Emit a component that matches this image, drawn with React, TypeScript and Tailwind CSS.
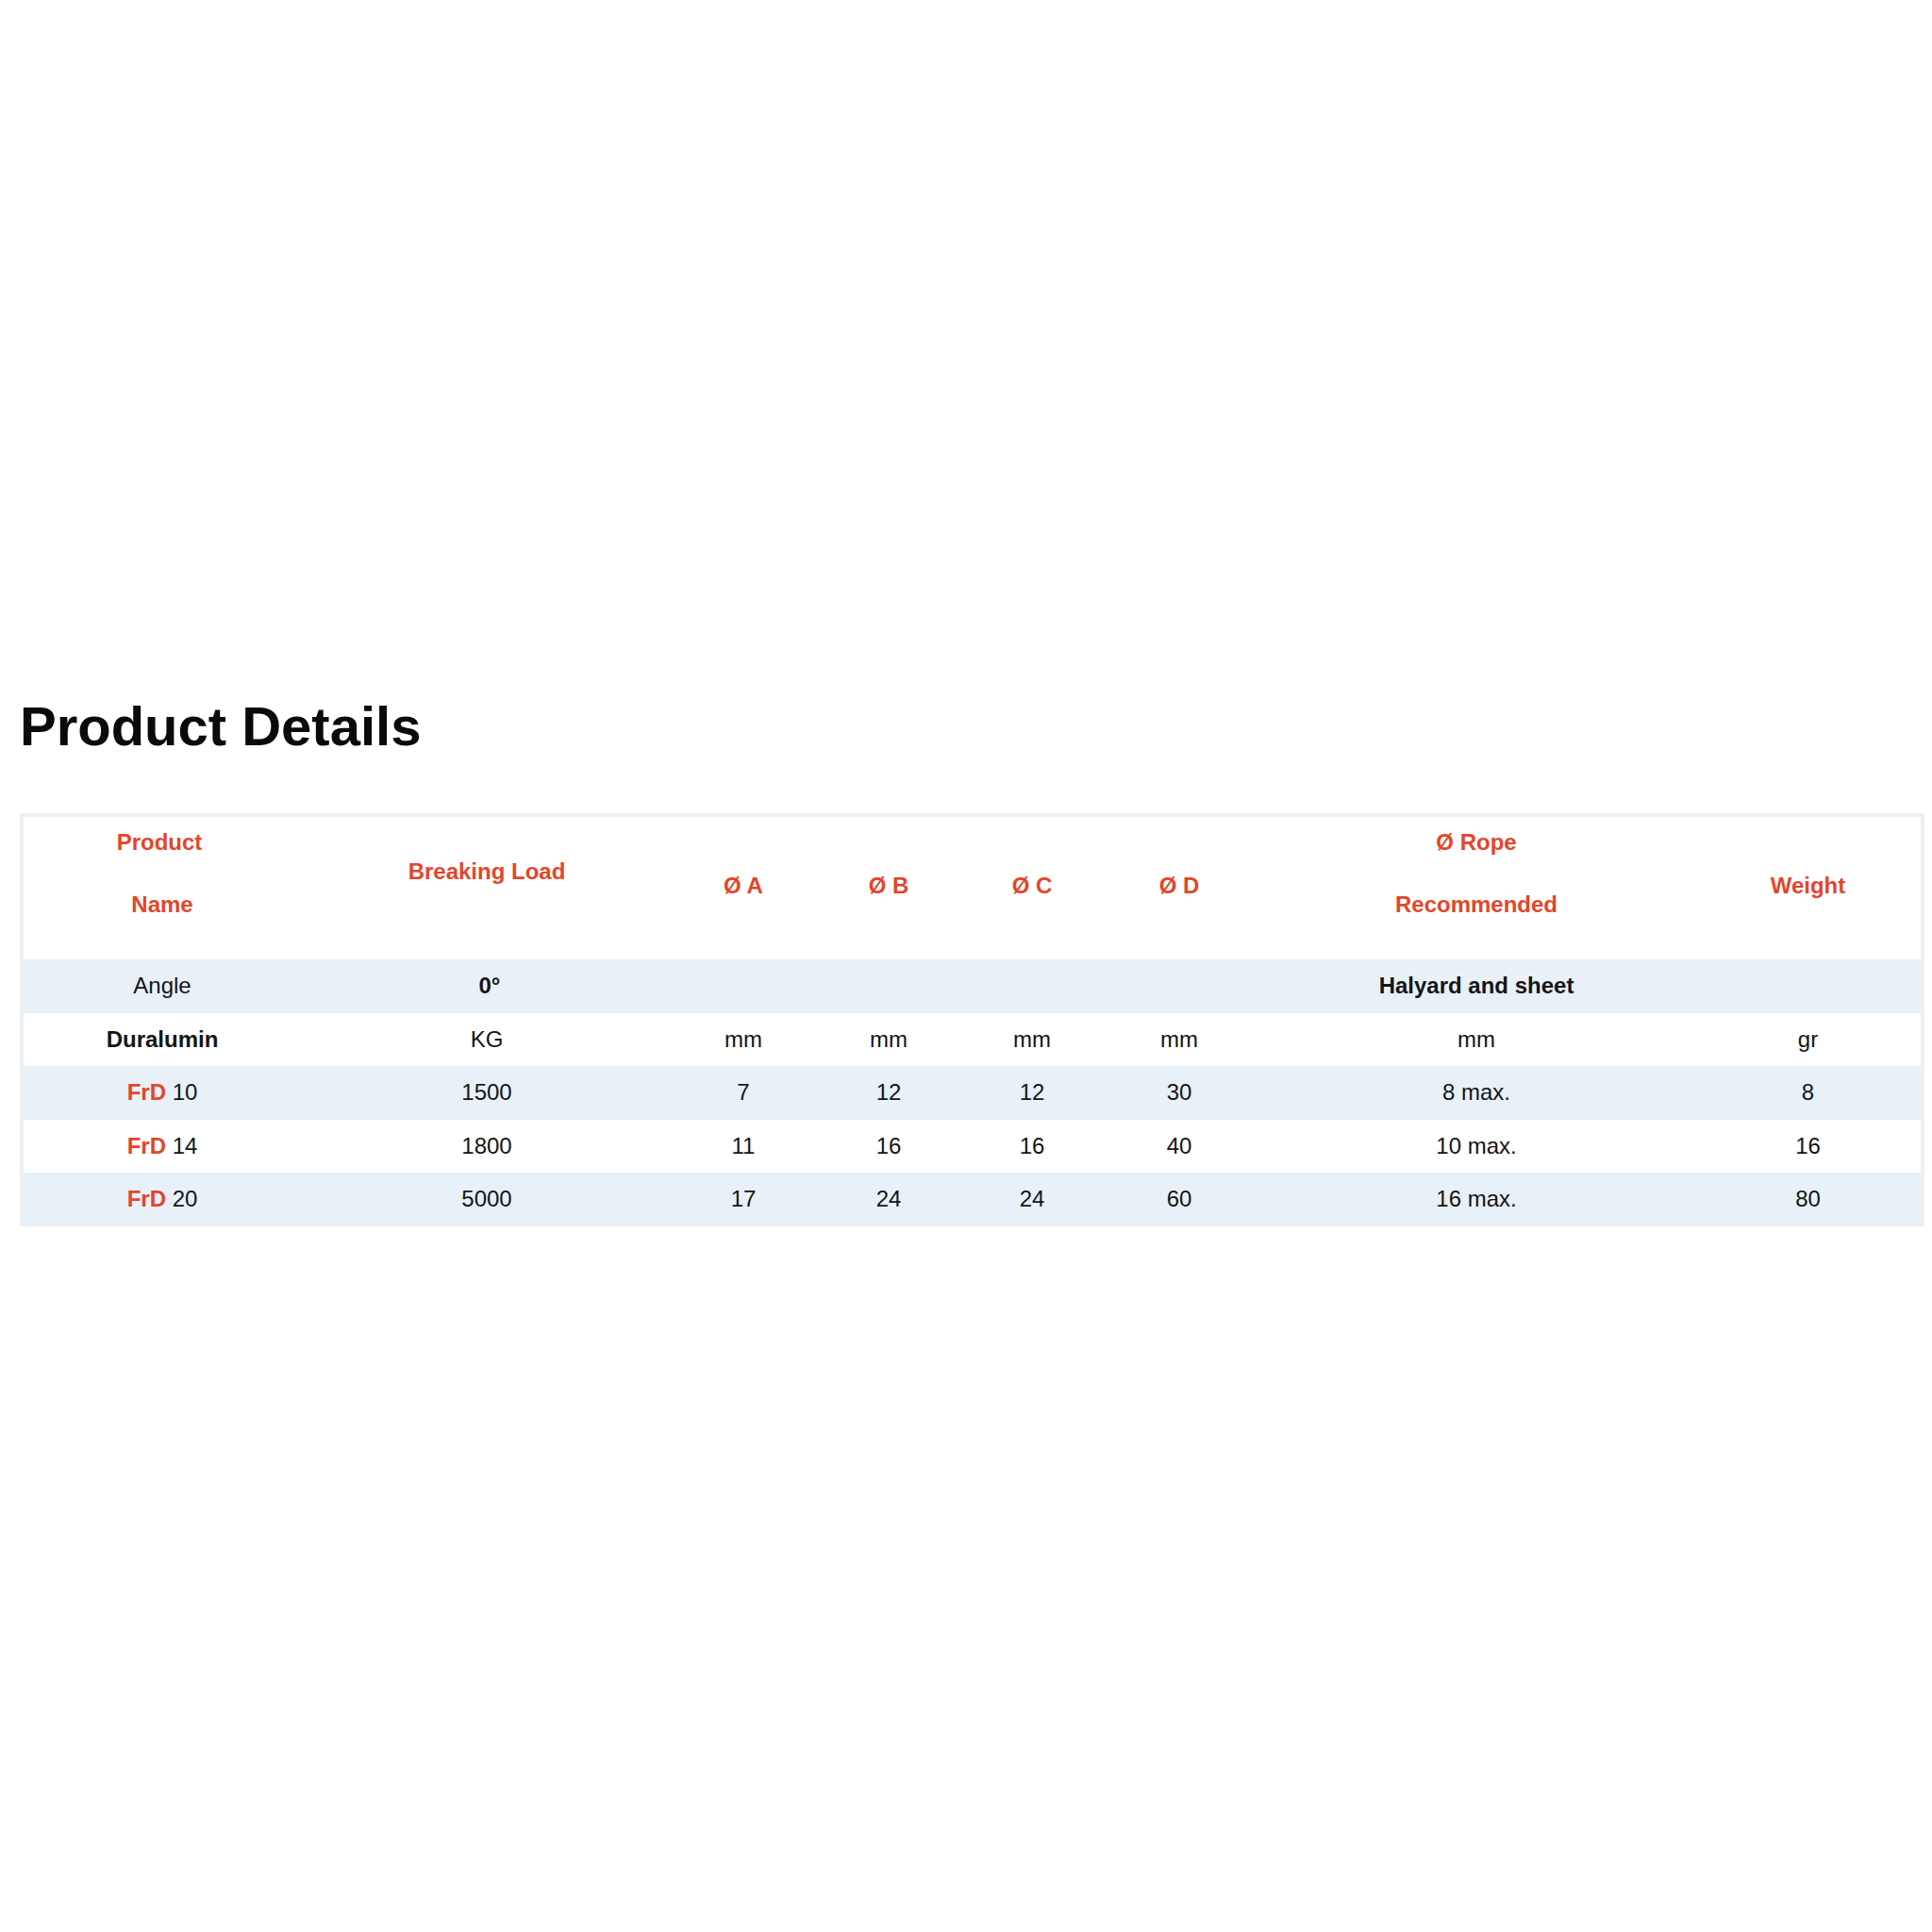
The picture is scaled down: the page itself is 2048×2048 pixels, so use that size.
import React from 'react';

type Row = {
    name: React.ReactNode;
    load: React.ReactNode;
    a: string;
    b: string;
    c: string;
    d: string;
    rope: React.ReactNode;
    weight: string;
};

const Red = ({ children }: { children: React.ReactNode }) => (
    <span className="font-bold text-[#e2462b]">{children}</span>
);

const rows: Row[] = [
    {
        name: 'Angle',
        load: <b className="pl-[6px]">0°</b>,
        a: '',
        b: '',
        c: '',
        d: '',
        rope: <b>Halyard and sheet</b>,
        weight: '',
    },
    {
        name: <b>Duralumin</b>,
        load: 'KG',
        a: 'mm',
        b: 'mm',
        c: 'mm',
        d: 'mm',
        rope: 'mm',
        weight: 'gr',
    },
    {
        name: (
            <>
                <Red>FrD</Red> 10
            </>
        ),
        load: '1500',
        a: '7',
        b: '12',
        c: '12',
        d: '30',
        rope: '8 max.',
        weight: '8',
    },
    {
        name: (
            <>
                <Red>FrD</Red> 14
            </>
        ),
        load: '1800',
        a: '11',
        b: '16',
        c: '16',
        d: '40',
        rope: '10 max.',
        weight: '16',
    },
    {
        name: (
            <>
                <Red>FrD</Red> 20
            </>
        ),
        load: '5000',
        a: '17',
        b: '24',
        c: '24',
        d: '60',
        rope: '16 max.',
        weight: '80',
    },
];

const HeadCell = ({
    top,
    children,
}: {
    top: string;
    children: React.ReactNode;
}) => (
    <th className={`align-top text-center font-bold text-[#e2462b] ${top}`}>
        {children}
    </th>
);

const App = () => {
    return (
        <div className="min-h-[2048px] bg-white pt-[741px] pl-[21px] pr-[8px] font-['Liberation_Sans',Arial,sans-serif] text-[#151515]">
            <h1 className="text-[58px] leading-[58px] font-bold text-[#0a0a0a]">
                Product Details
            </h1>

            <div className="mt-[63px] border-[4px] border-b-0 border-[#edf0f3] bg-white">
                <table className="w-full table-fixed border-collapse text-[24px] leading-[30px]">
                    <colgroup>
                        <col className="w-[294px]" />
                        <col className="w-[394px]" />
                        <col className="w-[150px]" />
                        <col className="w-[158px]" />
                        <col className="w-[146px]" />
                        <col className="w-[166px]" />
                        <col className="w-[464px]" />
                        <col />
                    </colgroup>
                    <thead>
                        <tr className="h-[151px]">
                            <HeadCell top="pt-[12px]">
                                <p className="pr-[6px]">Product</p>
                                <p className="mt-[36px]">Name</p>
                            </HeadCell>
                            <HeadCell top="pt-[43px]">Breaking Load</HeadCell>
                            <HeadCell top="pt-[58px]">Ø A</HeadCell>
                            <HeadCell top="pt-[58px]">Ø B</HeadCell>
                            <HeadCell top="pt-[58px]">Ø C</HeadCell>
                            <HeadCell top="pt-[58px]">Ø D</HeadCell>
                            <HeadCell top="pt-[12px]">
                                <p>Ø Rope</p>
                                <p className="mt-[36px]">Recommended</p>
                            </HeadCell>
                            <HeadCell top="pt-[58px]">Weight</HeadCell>
                        </tr>
                    </thead>
                    <tbody>
                        {rows.map((r, i) => (
                            <tr
                                key={i}
                                className={`h-[56.5px] ${
                                    i % 2 === 0 ? 'bg-[#e8f0f8]' : 'bg-white'
                                }`}
                            >
                                <td className="text-center align-middle">{r.name}</td>
                                <td className="text-center align-middle">{r.load}</td>
                                <td className="text-center align-middle">{r.a}</td>
                                <td className="text-center align-middle">{r.b}</td>
                                <td className="text-center align-middle">{r.c}</td>
                                <td className="text-center align-middle">{r.d}</td>
                                <td className="text-center align-middle">{r.rope}</td>
                                <td className="text-center align-middle">{r.weight}</td>
                            </tr>
                        ))}
                    </tbody>
                </table>
            </div>
        </div>
    );
};

export default App;
